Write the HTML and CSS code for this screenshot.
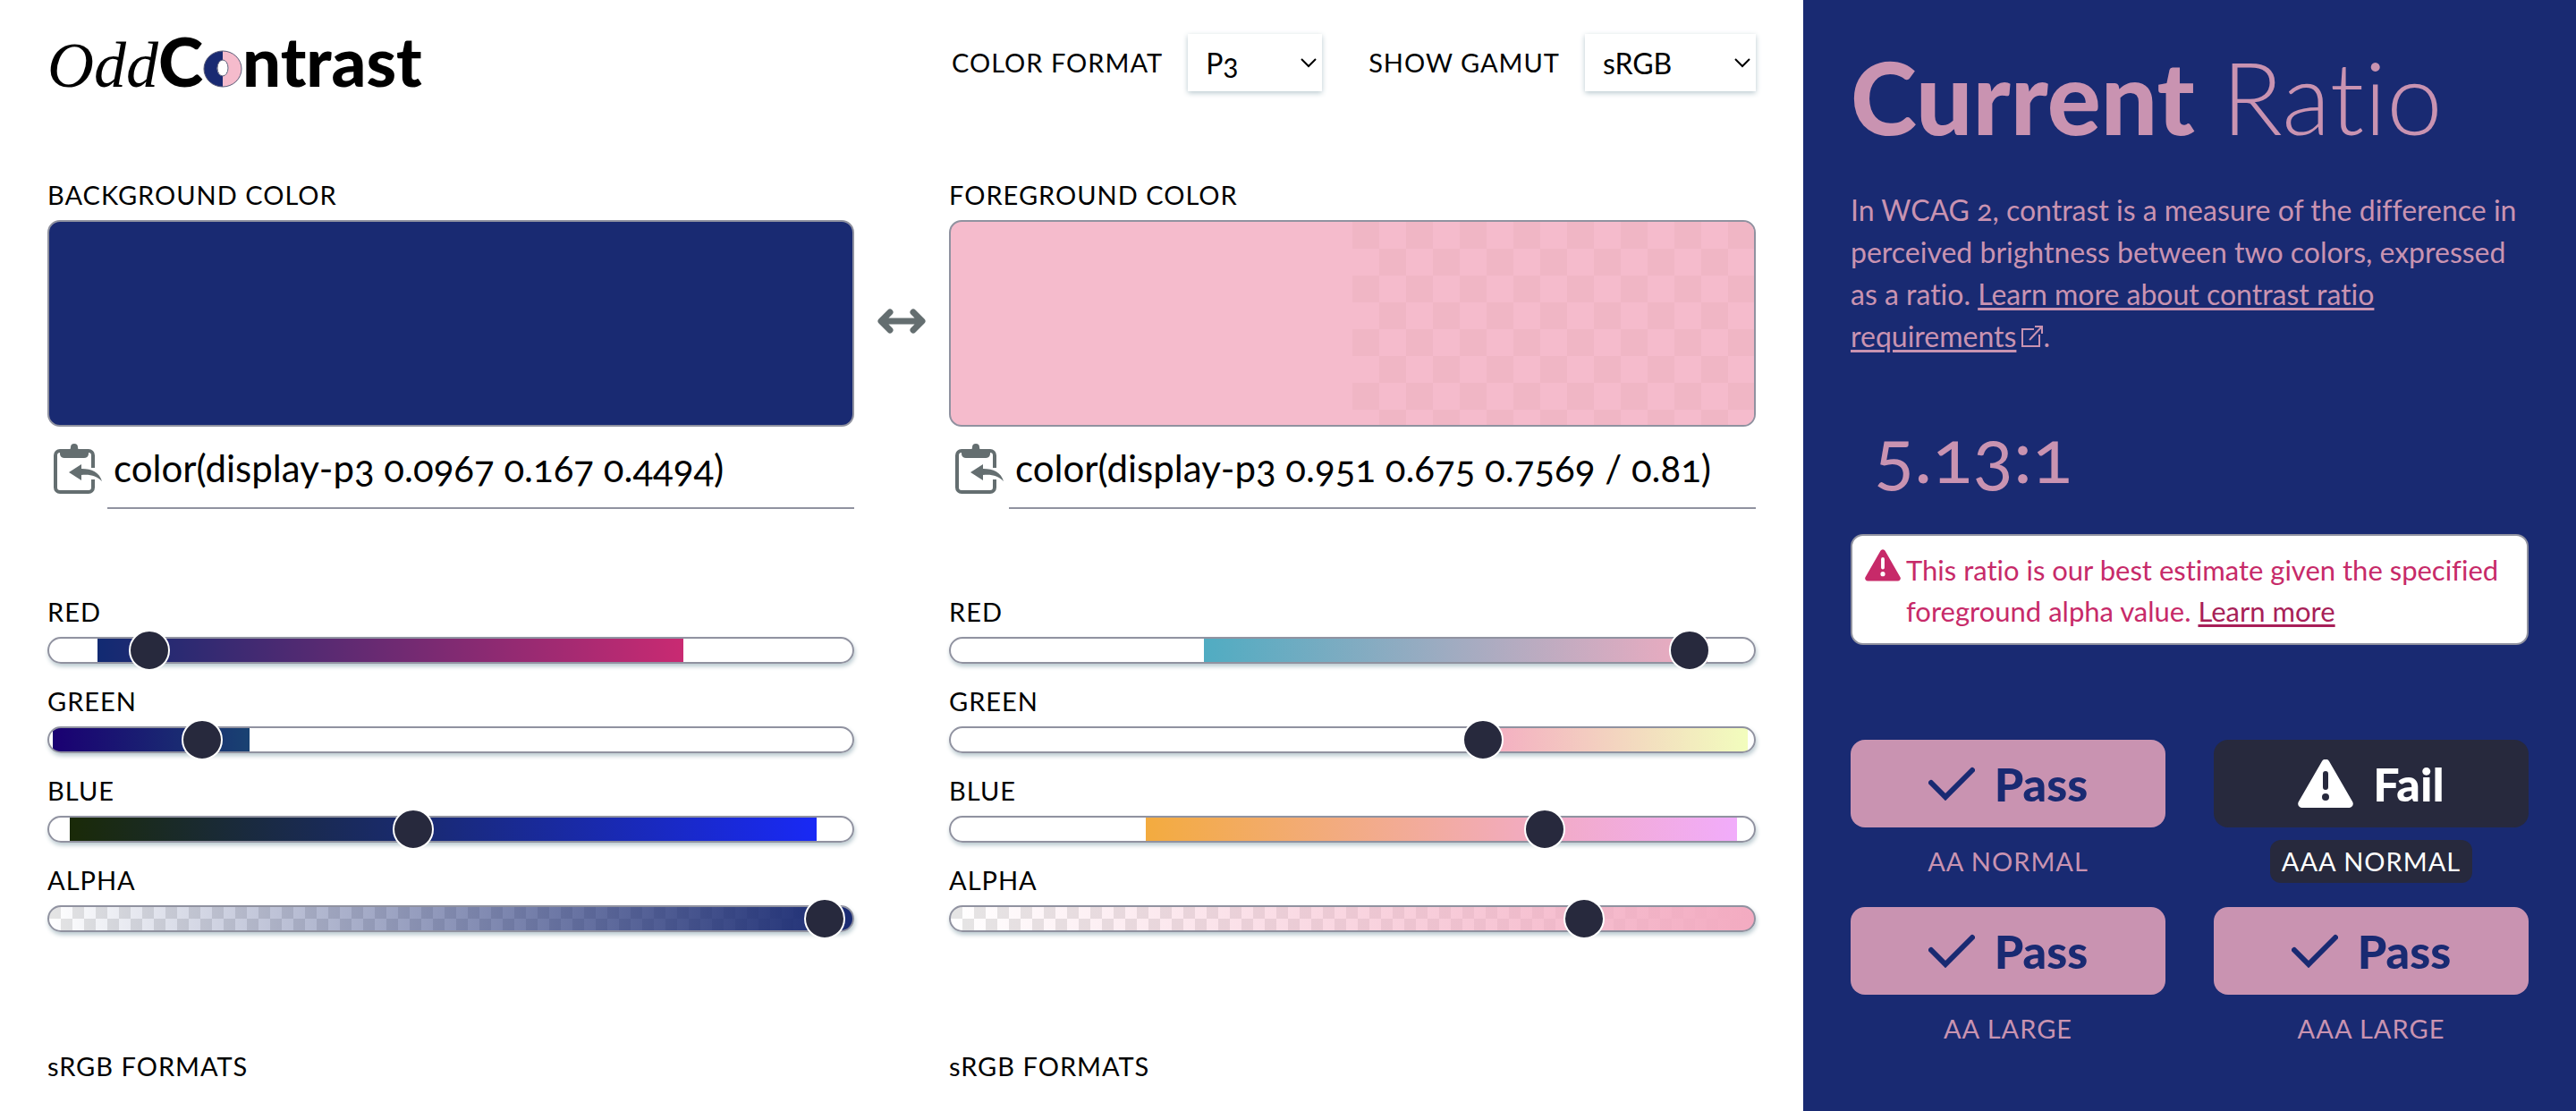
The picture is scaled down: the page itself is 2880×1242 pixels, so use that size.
FILE: index.html
```html
<!DOCTYPE html>
<html lang="en">
<head>
<meta charset="utf-8">
<meta name="viewport" content="width=device-width, initial-scale=1">
<title>OddContrast</title>
<link rel="stylesheet" href="styles.css">
</head>
<body>
<svg class="sprite" aria-hidden="true">
  <symbol id="icon-paste" viewBox="0 0 54 56">
    <path d="M44 27V13a5 5 0 0 0-5-5H7a5 5 0 0 0-5 5v36a5 5 0 0 0 5 5h32a5 5 0 0 0 5-5v-9" fill="none" stroke="currentColor" stroke-width="4"/>
    <path d="M7 7h10c1-1 2-1 2-3a4 4 0 0 1 8 0c0 2 1 3 2 3h10v4c0 3-2 5-5 5H12c-3 0-5-2-5-5z" fill="currentColor"/>
    <path d="M17 32 31 23v5c12 0 20 4 23 14-6-6-13-8-23-7v6z" fill="currentColor"/>
  </symbol>
  <symbol id="icon-swap" viewBox="0 0 54 28">
    <path d="M14 4 4 14l10 10M40 4l10 10-10 10M5 14h44" fill="none" stroke="currentColor" stroke-width="7" stroke-linecap="round" stroke-linejoin="round"/>
  </symbol>
  <symbol id="icon-check" viewBox="0 0 52 38">
    <path d="M3 18l16 16L49 4" fill="none" stroke="currentColor" stroke-width="6" stroke-linecap="round" stroke-linejoin="miter"/>
  </symbol>
  <symbol id="icon-warning" viewBox="0 0 62 54">
    <path fill-rule="evenodd" fill="currentColor" d="M27 2a4.600 4.600 0 0 1 8 0l26 45c2 3 0 7-4 7H5c-4 0-6-4-4-7zM31 13a3 3 0 0 0-3 3v15a3 3 0 0 0 6 0V16a3 3 0 0 0-3-3zM31 38a4 4 0 1 0 0 8 4 4 0 0 0 0-8z"/>
  </symbol>
  <symbol id="icon-chevron" viewBox="0 0 18 12">
    <path d="M1 2l8 8 8-8" fill="none" stroke="currentColor" stroke-width="2"/>
  </symbol>
  <symbol id="icon-external" viewBox="0 0 24 24">
    <path d="M14 4H1v19h19V10M9 16 22 2M15 1h8v8" fill="none" stroke="currentColor" stroke-width="2"/>
  </symbol>
</svg>

<div class="layout">
  <main class="main">
    <header class="header">
      <h1 class="logo" aria-label="OddContrast">
        <span class="logo-odd">Odd</span><span class="logo-contrast">C<svg class="logo-ring" viewBox="0 0 44 42" aria-hidden="true"><path d="M22 1a21 20 0 0 0 0 40V29a6 8 0 0 1 0-17z" fill="#192a72"/><path d="M22 1a21 20 0 0 1 0 40V29a6 8 0 0 0 0-17z" fill="#f5bbcc"/><ellipse cx="22" cy="21" rx="21" ry="20" fill="none" stroke="#5a5c78"/><ellipse cx="22" cy="20" rx="6" ry="9" fill="#fff" stroke="#5a5c78"/></svg>ntrast</span>
      </h1>
      <div class="options">
        <div class="option">
          <label class="label" for="format">COLOR FORMAT</label>
          <span class="select-wrap">
            <select class="select select-format" id="format"><option>P3</option></select>
            <svg class="chevron" aria-hidden="true"><use href="#icon-chevron"/></svg>
          </span>
        </div>
        <div class="option">
          <label class="label" for="gamut">SHOW GAMUT</label>
          <span class="select-wrap">
            <select class="select select-gamut" id="gamut"><option>sRGB</option></select>
            <svg class="chevron" aria-hidden="true"><use href="#icon-chevron"/></svg>
          </span>
        </div>
      </div>
    </header>

    <div class="colors">
      <section class="color">
        <label class="label" for="bg-color">BACKGROUND COLOR</label>
        <div class="swatch swatch-bg"></div>
        <div class="entry">
          <button class="icon-button" type="button" aria-label="Paste background color"><svg class="paste"><use href="#icon-paste"/></svg></button>
          <input class="value" id="bg-color" type="text" value="color(display-p3 0.0967 0.167 0.4494)">
        </div>
        <div class="sliders">
          <div class="slider"><label class="label" for="bg-red">RED</label><input class="range bg-red" id="bg-red" type="range" min="0" max="1" step="any" value="0.0967"></div>
          <div class="slider"><label class="label" for="bg-green">GREEN</label><input class="range bg-green" id="bg-green" type="range" min="0" max="1" step="any" value="0.167"></div>
          <div class="slider"><label class="label" for="bg-blue">BLUE</label><input class="range bg-blue" id="bg-blue" type="range" min="0" max="1" step="any" value="0.4494"></div>
          <div class="slider"><label class="label" for="bg-alpha">ALPHA</label><input class="range bg-alpha" id="bg-alpha" type="range" min="0" max="1" step="any" value="1"></div>
        </div>
        <h2 class="label formats">sRGB FORMATS</h2>
      </section>

      <button class="icon-button swap-button" type="button" aria-label="Swap colors"><svg class="swap"><use href="#icon-swap"/></svg></button>

      <section class="color">
        <label class="label" for="fg-color">FOREGROUND COLOR</label>
        <div class="swatch swatch-fg"><span class="checker"></span></div>
        <div class="entry">
          <button class="icon-button" type="button" aria-label="Paste foreground color"><svg class="paste"><use href="#icon-paste"/></svg></button>
          <input class="value" id="fg-color" type="text" value="color(display-p3 0.951 0.675 0.7569 / 0.81)">
        </div>
        <div class="sliders">
          <div class="slider"><label class="label" for="fg-red">RED</label><input class="range fg-red" id="fg-red" type="range" min="0" max="1" step="any" value="0.951"></div>
          <div class="slider"><label class="label" for="fg-green">GREEN</label><input class="range fg-green" id="fg-green" type="range" min="0" max="1" step="any" value="0.675"></div>
          <div class="slider"><label class="label" for="fg-blue">BLUE</label><input class="range fg-blue" id="fg-blue" type="range" min="0" max="1" step="any" value="0.7569"></div>
          <div class="slider"><label class="label" for="fg-alpha">ALPHA</label><input class="range fg-alpha" id="fg-alpha" type="range" min="0" max="1" step="any" value="0.81"></div>
        </div>
        <h2 class="label formats">sRGB FORMATS</h2>
      </section>
    </div>
  </main>

  <aside class="ratio">
    <h2 class="ratio-title"><strong>Current</strong> Ratio</h2>
    <p class="intro">In WCAG 2, contrast is a measure of the difference in perceived brightness between two colors, expressed as a ratio. <a class="link" href="#requirements">Learn more about contrast ratio requirements</a><svg class="external" aria-hidden="true"><use href="#icon-external"/></svg>.</p>
    <p class="result">5.13:1</p>
    <div class="alert">
      <svg class="alert-icon" aria-hidden="true"><use href="#icon-warning"/></svg>
      <p class="alert-text">This ratio is our best estimate given the specified foreground alpha value. <a class="alert-link" href="#estimate">Learn more</a></p>
    </div>
    <div class="grades">
      <div class="grade"><p class="badge"><svg class="check" aria-hidden="true"><use href="#icon-check"/></svg>Pass</p><p class="label grade-label">AA NORMAL</p></div>
      <div class="grade grade-fail"><p class="badge"><svg class="warning" aria-hidden="true"><use href="#icon-warning"/></svg>Fail</p><p class="label grade-label">AAA NORMAL</p></div>
      <div class="grade"><p class="badge"><svg class="check" aria-hidden="true"><use href="#icon-check"/></svg>Pass</p><p class="label grade-label">AA LARGE</p></div>
      <div class="grade"><p class="badge"><svg class="check" aria-hidden="true"><use href="#icon-check"/></svg>Pass</p><p class="label grade-label">AAA LARGE</p></div>
    </div>
  </aside>
</div>
</body>
</html>
```

FILE: styles.css
```css
:root {
  --navy: #192a72;
  --pink: #f5bbcc;
  --mauve: #c993b1;
  --ink: #27293d;
  --border: #9092a0;
  --icon: #646e70;
  --gutter: 53px;
}

*,
*::before,
*::after {
  box-sizing: border-box;
}

body {
  margin: 0;
  background: #fff;
  color: #000;
  font-family: Lato, "Open Sans", sans-serif;
  font-size: 32px;
  font-feature-settings: "onum";
  font-variant-ligatures: none;
}

h1, h2, p {
  margin: 0;
  font-weight: 400;
}

.sprite {
  display: none;
}

.layout {
  display: grid;
  grid-template-columns: 7fr 3fr;
  min-height: 100vh;
}

.main {
  padding: 38px var(--gutter) 20px;
}

.label {
  font-size: 29px;
  line-height: 36px;
  letter-spacing: 1px;
}

/* Header */

.header {
  display: flex;
  justify-content: space-between;
  align-items: center;
  height: 64px;
}

.logo {
  display: flex;
  align-items: baseline;
  line-height: 64px;
}

.logo-odd {
  font-family: "Liberation Serif", serif;
  font-style: italic;
  font-size: 72px;
}

.logo-contrast {
  font-size: 76px;
  font-weight: 900;
}

.logo-ring {
  width: 44px;
  height: 42px;
  vertical-align: -1px;
}

.options {
  display: flex;
  gap: 52px;
}

.option {
  display: flex;
  align-items: center;
  gap: 28px;
}

.select-wrap {
  position: relative;
  display: flex;
}

.select {
  height: 64px;
  padding: 0 20px;
  border: 0;
  background: #fff;
  box-shadow: 0 2px 6px #b9c9cf;
  color: #000;
  font: inherit;
  font-feature-settings: "onum";
  appearance: none;
}

.select-format {
  width: 150px;
}

.select-gamut {
  width: 191px;
}

.chevron {
  position: absolute;
  top: 26px;
  right: 6px;
  width: 18px;
  height: 12px;
  pointer-events: none;
}

/* Colors */

.colors {
  display: grid;
  grid-template-columns: 1fr 106px 1fr;
  align-items: start;
  margin-top: 98px;
}

.color {
  display: flex;
  flex-direction: column;
}

.swatch {
  display: flex;
  justify-content: flex-end;
  height: 231px;
  margin-top: 10px;
  border: 2px solid var(--border);
  border-radius: 14px;
  overflow: hidden;
}

.swatch-bg {
  background: var(--navy);
}

.swatch-fg {
  background: var(--pink);
}

.checker {
  width: 50%;
  background: repeating-conic-gradient(var(--pink) 0 25%, #f0b6c5 0 50%) 0 0 / 60px 60px;
}

.icon-button {
  padding: 0;
  border: 0;
  background: none;
  color: var(--icon);
}

.icon-button svg {
  display: block;
}

.entry {
  display: flex;
  align-items: center;
  gap: 6px;
  margin-top: 2px;
  padding-left: 7px;
}

.paste {
  width: 54px;
  height: 56px;
}

.value {
  flex: 1;
  min-width: 0;
  height: 90px;
  padding: 0 7px;
  border: 0;
  border-bottom: 2px solid var(--border);
  background: none;
  color: #000;
  font: inherit;
  font-size: 42px;
  font-feature-settings: "onum";
}

.swap-button {
  justify-self: center;
  margin-top: 145px;
}

.swap {
  width: 54px;
  height: 28px;
}

.sliders {
  display: flex;
  flex-direction: column;
  gap: 24px;
  margin-top: 97px;
}

.slider {
  display: flex;
  flex-direction: column;
  gap: 10px;
}

.range {
  width: 100%;
  height: 30px;
  margin: 0;
  padding: 0 8px;
  border: 2px solid var(--border);
  border-radius: 16px;
  box-shadow: 1px 3px 5px #b9c9cf;
  appearance: none;
}

.range::-webkit-slider-thumb {
  width: 46px;
  height: 46px;
  border: 2px solid #fff;
  border-radius: 50%;
  background: var(--ink);
  appearance: none;
}

.bg-red {
  background: linear-gradient(90deg, #fff 6%, #112a72 6%, #c92a72 79%, #fff 79%);
}

.bg-green {
  background: linear-gradient(90deg, #fff 0.5%, #1a0072 0.5%, #194272 25%, #fff 25%);
}

.bg-blue {
  background: linear-gradient(90deg, #fff 2.6%, #1a2a08 2.6%, #192a72 46%, #1929f5 95.5%, #fff 95.5%);
}

.bg-alpha {
  background:
    linear-gradient(90deg, transparent, var(--navy)),
    repeating-conic-gradient(#fff 0 25%, #e5e5e5 0 50%) 0 0 / 26px 26px;
}

.fg-red {
  background: linear-gradient(90deg, #fff 31.5%, #50acc2 31.5%, #f2abc0 94.2%, #fff 94.2%);
}

.fg-green {
  background: linear-gradient(90deg, #fff 66%, #f4abc2 66%, #f2fdbd 99.2%, #fff 99.2%);
}

.fg-blue {
  background: linear-gradient(90deg, #fff 24.3%, #f3ab3f 24.3%, #f2abc0 72%, #f1acfb 97.9%, #fff 97.9%);
}

.fg-alpha {
  background:
    linear-gradient(90deg, transparent, #f3abc1),
    repeating-conic-gradient(#fff 0 25%, #e5e5e5 0 50%) 0 0 / 26px 26px;
}

.formats {
  margin-top: 132px;
}

/* Ratio panel */

.ratio {
  padding: 46px var(--gutter);
  background: var(--navy);
  color: var(--mauve);
}

.ratio-title {
  font-size: 112px;
  font-weight: 300;
  line-height: 124px;
  white-space: nowrap;
}

.ratio-title strong {
  font-weight: 900;
}

.intro {
  margin-top: 41px;
  line-height: 47px;
}

.link {
  color: inherit;
  text-underline-offset: 3px;
}

.external {
  width: 24px;
  height: 24px;
  margin-left: 6px;
}

.result {
  margin-top: 53px;
  padding: 0 26px;
  font-size: 84px;
  line-height: 112px;
}

.alert {
  display: flex;
  align-items: flex-start;
  gap: 6px;
  margin-top: 33px;
  padding: 15px 10px 13px 14px;
  border: 2px solid var(--border);
  border-radius: 14px;
  background: #fff;
  color: #c72a69;
}

.alert-icon {
  flex: none;
  width: 40px;
  height: 36px;
}

.alert-text {
  font-size: 31px;
  line-height: 46px;
}

.alert-link {
  color: #a81f58;
  text-underline-offset: 3px;
}

.grades {
  display: grid;
  grid-template-columns: 1fr 1fr;
  gap: 27px 54px;
  margin-top: 106px;
}

.grade {
  display: flex;
  flex-direction: column;
  align-items: center;
  gap: 14px;
}

.badge {
  display: flex;
  align-items: center;
  justify-content: center;
  gap: 22px;
  width: 100%;
  height: 98px;
  border-radius: 16px;
  background: var(--mauve);
  color: var(--navy);
  font-size: 52px;
  font-weight: 900;
}

.check {
  width: 52px;
  height: 38px;
}

.warning {
  width: 62px;
  height: 54px;
}

.grade-label {
  padding: 6px 13px;
  border-radius: 12px;
}

.grade-fail .badge,
.grade-fail .grade-label {
  background: var(--ink);
  color: #fff;
}
```
